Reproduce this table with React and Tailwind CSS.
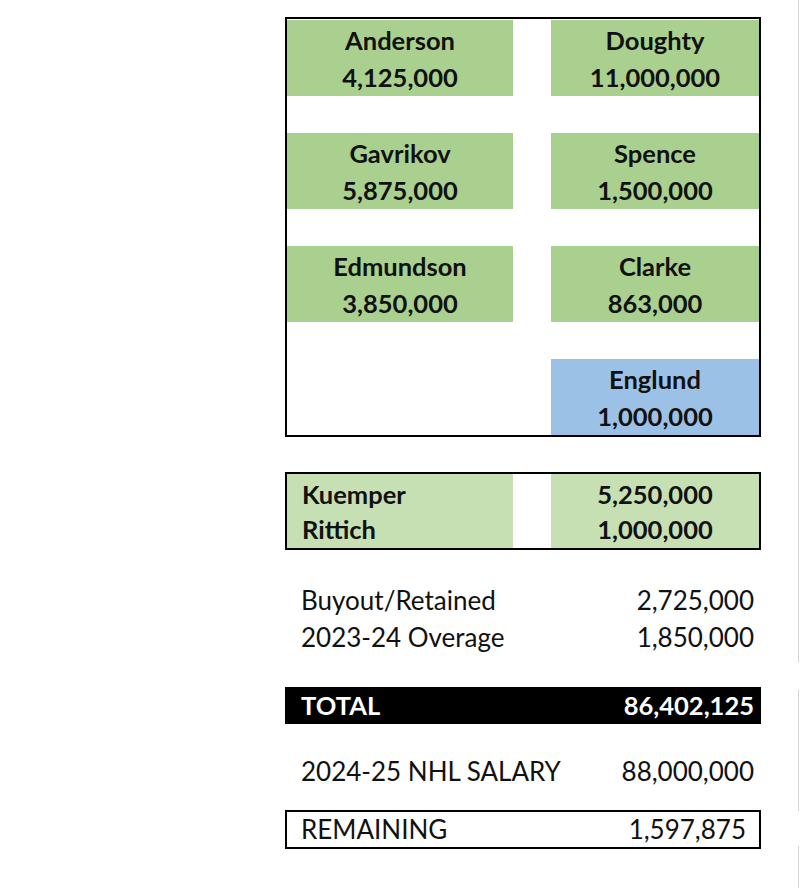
import React from 'react';

const skaters = [
  [
    { name: 'Anderson', cap: '4,125,000', color: 'bg-[#a9d08e]' },
    { name: 'Doughty', cap: '11,000,000', color: 'bg-[#a9d08e]' },
  ],
  [
    { name: 'Gavrikov', cap: '5,875,000', color: 'bg-[#a9d08e]' },
    { name: 'Spence', cap: '1,500,000', color: 'bg-[#a9d08e]' },
  ],
  [
    { name: 'Edmundson', cap: '3,850,000', color: 'bg-[#a9d08e]' },
    { name: 'Clarke', cap: '863,000', color: 'bg-[#a9d08e]' },
  ],
  [null, { name: 'Englund', cap: '1,000,000', color: 'bg-[#9bc2e6]' }],
];

const PlayerCell = ({ player }) => {
  if (!player) return <div className="h-[76px]" />;
  return (
    <div className={`h-[76px] pt-[2px] flex flex-col items-center font-bold text-[25.5px] leading-[37px] ${player.color}`}>
      <span>{player.name}</span>
      <span>{player.cap}</span>
    </div>
  );
};

const App = () => {
  return (
    <div className="w-[800px] h-[888px] bg-white flex text-[#111] text-[26px] font-['Lato',sans-serif]">
      <div className="w-[285px] shrink-0" />

      <div className="w-[476px] shrink-0 flex flex-col pt-[17px]">
        {/* skaters grid */}
        <div className="border-2 border-black pt-px flex flex-col gap-[37px]">
          {skaters.map((row, i) => (
            <div key={i} className="grid grid-cols-[226px_38px_1fr]">
              <PlayerCell player={row[0]} />
              <div />
              <PlayerCell player={row[1]} />
            </div>
          ))}
        </div>

        {/* goalies */}
        <div className="mt-[35px] border-2 border-black grid grid-cols-[226px_38px_1fr] font-bold text-[25.5px] leading-[35px]">
          <div className="bg-[#c6e0b4] pt-[3px] pb-px pl-[15px] flex flex-col">
            <span>Kuemper</span>
            <span>Rittich</span>
          </div>
          <div />
          <div className="bg-[#c6e0b4] pt-[3px] pb-px flex flex-col items-center">
            <span>5,250,000</span>
            <span>1,000,000</span>
          </div>
        </div>

        <div className="mt-[32px] leading-[37px] pl-[16px] pr-[7px]">
          <div className="flex justify-between">
            <span>Buyout/Retained</span>
            <span>2,725,000</span>
          </div>
          <div className="flex justify-between">
            <span>2023-24 Overage</span>
            <span>1,850,000</span>
          </div>
        </div>

        <div className="mt-[31px] h-[37px] bg-black text-white font-bold text-[25.5px] leading-[37px] pl-[16px] pr-[7px] flex justify-between">
          <span>TOTAL</span>
          <span>86,402,125</span>
        </div>

        <div className="mt-[29px] leading-[37px] pl-[16px] pr-[7px] flex justify-between">
          <span>2024-25 NHL SALARY</span>
          <span>88,000,000</span>
        </div>

        <div className="mt-[20px] h-[39px] border-2 border-black leading-[35px] pl-[14px] pr-[13px] flex justify-between">
          <span>REMAINING</span>
          <span>1,597,875</span>
        </div>
      </div>

      <div className="flex-1" />

      {/* faint sheet edge */}
      <div className="w-px flex flex-col">
        <div className="h-[662px] bg-[#d4d4d4]" />
        <div className="h-[28px]" />
        <div className="h-[121px] bg-[#d4d4d4]" />
        <div className="h-[35px]" />
        <div className="flex-1 bg-[#d4d4d4]" />
      </div>
      <div className="w-px" />
    </div>
  );
};

export default App;
